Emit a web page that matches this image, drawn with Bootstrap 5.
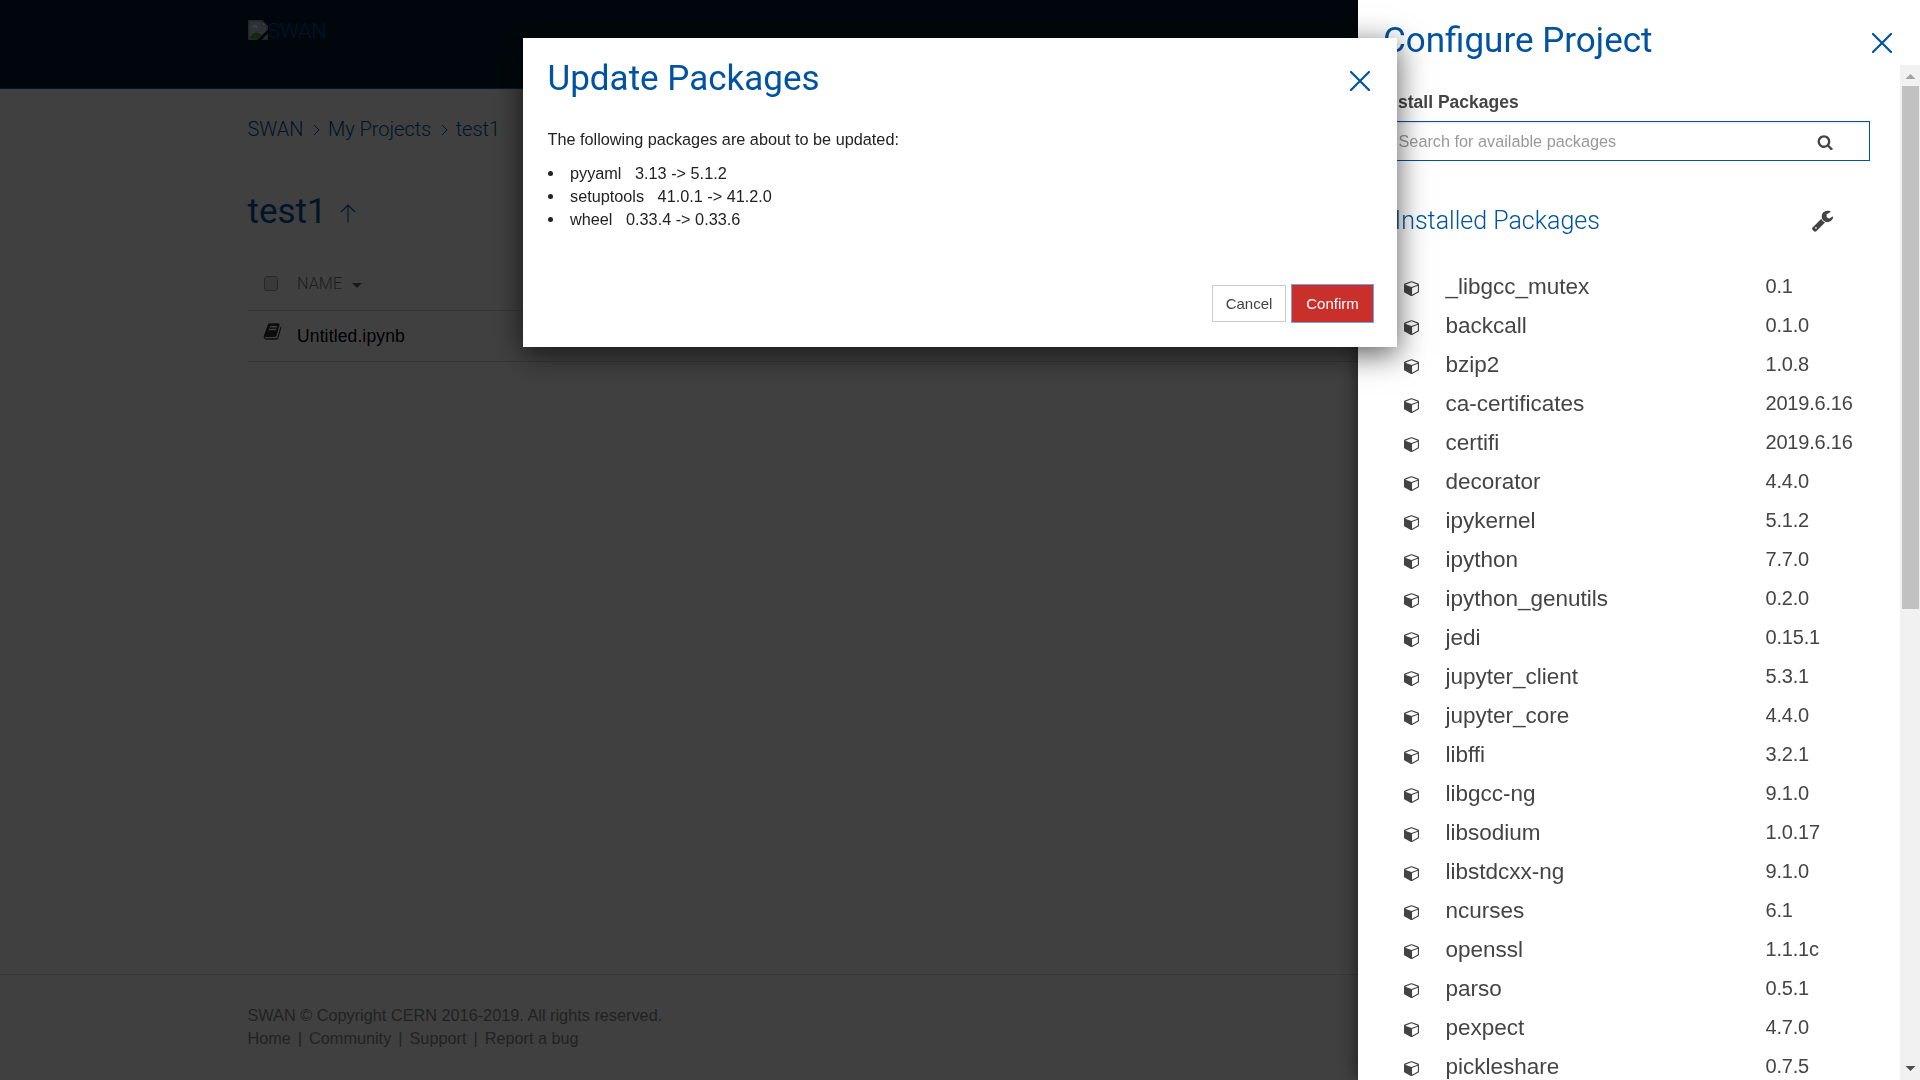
<!DOCTYPE html>
<html lang="en">
<head>
<meta charset="utf-8">
<meta name="viewport" content="width=device-width, initial-scale=1">
<title>SWAN - test1</title>
<link href="https://cdn.jsdelivr.net/npm/bootstrap@5.3.0/dist/css/bootstrap.min.css" rel="stylesheet">
<style>
:root { --swan-blue: #0053a1; }
body { font-family: "Liberation Sans", Arial, sans-serif; font-size: 16.25px; line-height: 23px; color: #222; overflow: hidden; }
svg { display: block; flex: none; }
.rb { font-family: Roboto, sans-serif; }
.swan-title { font-family: Roboto, sans-serif; font-size: 35px; line-height: 42px; font-weight: 400; color: var(--swan-blue); margin: 0; }
.inset { padding-left: 247.5px; padding-right: 248px; }
.swan-header { height: 89px; background: #001e30; border-bottom: 1px solid #0062b5; padding-top: 17px; }
.swan-logo { color: #0053a8; font-size: 21px; line-height: 28px; font-weight: 300; }
.crumbs { font-size: 20px; line-height: 28px; font-weight: 300; padding-top: 26px; letter-spacing: -.03px; }
.crumbs a { color: var(--swan-blue); text-decoration: none; }
.crumbs svg { margin: 2px 8px 0 9.5px; }
.project-head { padding-top: 48px; padding-bottom: 24px; }
.file-row { border-bottom: 1px solid #d4d4d4; height: 51px; }
.file-row.head { height: 54px; font-size: 16.25px; color: #777; font-weight: 300; }
.file-icon { width: 49.5px; padding-left: 15px; }
.file-name { font-size: 17.5px; color: #000; letter-spacing: .13px; }
.box { width: 14.5px; height: 15px; border: 1.5px solid #a0a0a0; border-radius: 3px; margin-left: 1px; background: #e4e4e4; }
.swan-footer { border-top: 1px solid #ddd; height: 106px; padding-top: 29px; color: #888; }
.swan-footer .legal { letter-spacing: .01px; }
.swan-footer a { color: inherit; text-decoration: none; }
.swan-footer i { font-style: normal; margin: 0 7px; }
.offcanvas-backdrop.show { opacity: .75; }
.offcanvas.offcanvas-end { width: 562px; border: 0; color: #444; box-shadow: 0 0 19px rgba(0,0,0,.6); }
.panel-head { height: 65px; padding: 12px 28px 0 25px; }
.panel-body { padding: 25px 30px 0 24.5px; }
.field-label { font-size: 17.5px; line-height: 24px; font-weight: 700; margin-bottom: 7px; color: #444; }
.search-box { height: 40px; border: 1px solid var(--swan-blue); box-shadow: inset 0 1px 2px rgba(0,0,0,.1); padding: 0 35px 0 15px; color: #999; line-height: 38px; }
.section-head { font-family: Roboto, sans-serif; font-size: 25px; line-height: 30px; font-weight: 300; color: var(--swan-blue); margin: 0; }
.installed { padding: 45px 36px 31px 12px; }
.pkg { height: 39px; line-height: 39px; padding-left: 21px; }
.pkg svg { margin-top: 3.5px; }
.pkg-name { font-size: 22.5px; width: 320px; margin-left: 27px; }
.pkg-ver { font-size: 20px; white-space: nowrap; letter-spacing: -.2px; }
.rail { width: 20px; background: #f1f1f1; }
.rail-thumb { width: 17px; height: 523px; background: #c1c1c1; }
.modal-dialog.update { width: 874px; max-width: 874px; margin: 38px auto 0; }
.update .modal-content { height: 309px; border: 0; border-radius: 0; padding: 20px 24px 25px 24.5px; box-shadow: 0 7px 28px 1px rgba(0,0,0,.62); }
.update ul { padding: 0; margin: 11px 0 0; list-style: none; }
.update li { display: flex; align-items: center; gap: 17.5px; }
.update li::before { content: ""; width: 5px; height: 5px; border-radius: 50%; background: #222; }
.update .btn { border-radius: 0; font-size: 15px; line-height: 21px; padding: 7px 0; height: 37px; }
.btn-cancel { width: 74px; border: 1px solid #ccc; color: #444; }
.btn-confirm, .btn-confirm:hover { width: 81px; background: #c9302c; border: 0; color: #fff; outline: 1.5px solid #6fa3ee; outline-offset: 0; }
</style>
<script src="https://cdn.jsdelivr.net/npm/bootstrap@5.3.0/dist/js/bootstrap.bundle.min.js"></script>
</head>
<body>
<div class="vh-100 d-flex flex-column">
  <header class="swan-header inset">
    <a class="swan-logo rb d-flex text-decoration-none" href="#">
      <svg width="20" height="20" viewBox="0 0 20 20" style="margin-top:3px"><path d="M.7.7H14L19.3 6v13.3H.7z" fill="#b9c6dd" stroke="#909090" stroke-width="1.4"/><path d="M14 1v5h5z" fill="#f2f2f2" stroke="#909090"/><path d="M4 7.5q0-2 2-1.800 2-1.500 3 .4 1.500.2 1.300 1.400z" fill="#fff"/><path d="M1.400 18.600q2-6 7.500-6 3 0 4.500 2.500l-4 3.500z" fill="#4d9a34"/><path d="M9 20 20 9.500v4L13.500 20z" fill="#001e30"/></svg>SWAN
    </a>
  </header>
  <main class="inset flex-grow-1">
    <nav class="crumbs rb d-flex align-items-center">
      <a href="#">SWAN</a>
      <svg width="7" height="12" viewBox="0 0 7 12" fill="none" stroke="#0053a1" stroke-width="1"><path d="M1 1l5 5-5 5"/></svg>
      <a href="#">My Projects</a>
      <svg width="7" height="12" viewBox="0 0 7 12" fill="none" stroke="#0053a1" stroke-width="1"><path d="M1 1l5 5-5 5"/></svg>
      <a href="#">test1</a>
    </nav>
    <div class="project-head d-flex align-items-center">
      <h1 class="swan-title">test1</h1>
      <svg width="16" height="19" viewBox="0 0 16 19" fill="none" stroke="#0053a1" stroke-width="1.100" style="margin:3px 0 0 13.5px"><path d="M8 18.500V1M1 8l7-7 7 7"/></svg>
    </div>
    <div class="file-row head rb d-flex align-items-center">
      <div class="file-icon"><div class="box"></div></div>
      <span>NAME</span>
      <svg width="10" height="5" viewBox="0 0 10 5" style="margin:4px 0 0 9.500px"><path d="M0 0h10L5 5z" fill="#666"/></svg>
    </div>
    <div class="file-row d-flex align-items-center">
      <div class="file-icon"><svg style="margin-bottom:10px" width="19" height="19" viewBox="0 0 1792 1792" fill="#333"><path d="M1703 478q40 57 18 129l-275 906q-19 64-76.500 107.500t-122.500 43.500h-923q-77 0-148.500-53.500t-99.500-131.500q-24-67-2-127 0-4 3-27t4-37q1-8-3-21.500t-3-19.500q2-11 8-21t16.500-23.500 16.500-23.500q23-38 45-91.500t30-91.500q3-10 .5-30t-.5-28q3-11 17-28t17-23q21-36 42-92t25-90q1-9-2.500-32t.5-28q4-13 22-30.500t22-22.500q19-26 42.500-84.500t27.500-96.500q1-8-3-25.500t-2-26.500q2-8 9-18t18-23 17-21q8-12 16.500-30.500t15-35 16-36 19.500-32 26.500-23.500 36-11.500 47.500 5.500l-1 3q38-9 51-9h761q74 0 114 56t18 130l-274 906q-36 119-71.500 153.500t-128.500 34.500h-869q-27 0-38 15-11 16-1 43 24 70 144 70h923q29 0 56-15.500t35-41.500l300-987q7-22 5-57 38 15 59 43zm-1064 2q-4 13 2 22.500t20 9.500h608q13 0 25.500-9.500t16.500-22.500l21-64q4-13-2-22.500t-20-9.500h-608q-13 0-25.500 9.500t-16.500 22.500zm-83 256q-4 13 2 22.500t20 9.500h608q13 0 25.500-9.500t16.500-22.500l21-64q4-13-2-22.500t-20-9.500h-608q-13 0-25.500 9.500t-16.500 22.500z"/></svg></div>
      <span class="file-name">Untitled.ipynb</span>
    </div>
  </main>
  <footer class="swan-footer inset">
    <div class="legal">SWAN © Copyright CERN 2016-2019. All rights reserved.</div>
    <div class="d-flex"><a href="#">Home</a><i>|</i><a href="#">Community</a><i>|</i><a href="#">Support</a><i>|</i><a href="#">Report a bug</a></div>
  </footer>
</div>

<div class="offcanvas-backdrop show"></div>

<aside class="offcanvas offcanvas-end show" data-bs-backdrop="false" data-bs-scroll="true">
  <div class="panel-head d-flex justify-content-between align-items-start">
    <h2 class="swan-title" style="margin-top:8px">Configure Project</h2>
    <svg width="20" height="20" viewBox="0 0 20 20" stroke="#0053a1" stroke-width="2.200" stroke-linecap="round" style="margin-top:21px"><path d="M1 1l18 18M19 1L1 19"/></svg>
  </div>
  <div class="d-flex flex-grow-1 overflow-hidden">
    <div class="panel-body flex-grow-1">
      <div class="field-label">Install Packages</div>
      <div class="search-box d-flex justify-content-between align-items-center">
        <span>Search for available packages</span>
        <svg width="16.250" height="16.250" viewBox="0 0 1792 1792" fill="#444" style="margin:3px 1px 0 0"><path d="M1216 832q0-185-131.500-316.500t-316.500-131.500-316.500 131.500-131.500 316.500 131.500 316.500 316.500 131.500 316.500-131.500 131.500-316.500zm512 832q0 52-38 90t-90 38q-54 0-90-38l-343-342q-179 124-399 124-143 0-273.500-55.500t-225-150-150-225-55.500-273.500 55.500-273.500 150-225 225-150 273.500-55.500 273.500 55.500 225 150 150 225 55.500 273.500q0 220-124 399l343 343q37 37 37 90z"/></svg>
      </div>
      <div class="installed d-flex justify-content-between align-items-center">
        <h3 class="section-head">Installed Packages</h3>
        <svg width="23" height="23" viewBox="0 0 1792 1792" fill="#444"><path d="M448 1472q0-26-19-45t-45-19-45 19-19 45 19 45 45 19 45-19 19-45zm644-420l-682 682q-37 37-90 37-52 0-91-37l-106-108q-38-36-38-90 0-53 38-91l681-681q39 98 114.500 173.500t173.500 114.500zm634-435q0 39-23 106-47 134-164.500 217.500t-258.500 83.500q-185 0-316.500-131.500t-131.500-316.500 131.500-316.500 316.500-131.500q58 0 121.500 16.500t107.500 46.500q16 11 16 28t-16 28l-293 169v224l193 107q5-3 79-48.500t135.500-81 70.500-35.500q15 0 23.500 10t8.500 25z"/></svg>
      </div>
      <div id="packages"></div>
    </div>
    <div class="rail d-flex flex-column align-items-center flex-shrink-0">
      <svg width="20" height="21" viewBox="0 0 20 21"><path d="M5.500 14h10l-5-5z" fill="#a3a3a3"/></svg>
      <div class="rail-thumb"></div>
      <svg class="mt-auto" width="20" height="21" viewBox="0 0 20 21"><path d="M5.500 7h10l-5 5z" fill="#505050"/></svg>
    </div>
  </div>
</aside>

<div class="modal show d-block" tabindex="-1">
  <div class="modal-dialog update">
    <div class="modal-content">
      <div class="d-flex justify-content-between align-items-start">
        <h2 class="swan-title">Update Packages</h2>
        <svg width="20" height="20" viewBox="0 0 20 20" stroke="#0053a1" stroke-width="2.200" stroke-linecap="round" style="margin:13px 3.5px 0 0"><path d="M1 1l18 18M19 1L1 19"/></svg>
      </div>
      <div style="margin-top:28px">The following packages are about to be updated:</div>
      <ul>
        <li>pyyaml&nbsp;&nbsp; 3.13 -&gt; 5.1.2</li>
        <li>setuptools&nbsp;&nbsp; 41.0.1 -&gt; 41.2.0</li>
        <li>wheel&nbsp;&nbsp; 0.33.4 -&gt; 0.33.6</li>
      </ul>
      <div class="d-flex justify-content-end mt-auto">
        <button class="btn btn-cancel">Cancel</button>
        <button class="btn btn-confirm" style="margin-left:6px">Confirm</button>
      </div>
    </div>
  </div>
</div>

<script>
const packages = [["_libgcc_mutex","0.1"],["backcall","0.1.0"],["bzip2","1.0.8"],["ca-certificates","2019.6.16"],["certifi","2019.6.16"],["decorator","4.4.0"],["ipykernel","5.1.2"],["ipython","7.7.0"],["ipython_genutils","0.2.0"],["jedi","0.15.1"],["jupyter_client","5.3.1"],["jupyter_core","4.4.0"],["libffi","3.2.1"],["libgcc-ng","9.1.0"],["libsodium","1.0.17"],["libstdcxx-ng","9.1.0"],["ncurses","6.1"],["openssl","1.1.1c"],["parso","0.5.1"],["pexpect","4.7.0"],["pickleshare","0.7.5"]];
const cube = '<svg width="15" height="16.25" viewBox="0 0 1664 1792" fill="#444"><path d="M896 1629l640-349v-636l-640 233v752zm-64-865l698-254-698-254-698 254zm832-252v768q0 35-18 65t-49 47l-704 384q-28 16-61 16t-61-16l-704-384q-31-17-49-47t-18-65v-768q0-40 23-73t61-47l704-256q22-8 44-8t44 8l704 256q38 14 61 47t23 73z"/></svg>';
document.getElementById("packages").innerHTML = packages.map(([name, version]) =>
  `<div class="pkg d-flex align-items-center">${cube}<span class="pkg-name">${name}</span><span class="pkg-ver">${version}</span></div>`).join("");
</script>
</body>
</html>
